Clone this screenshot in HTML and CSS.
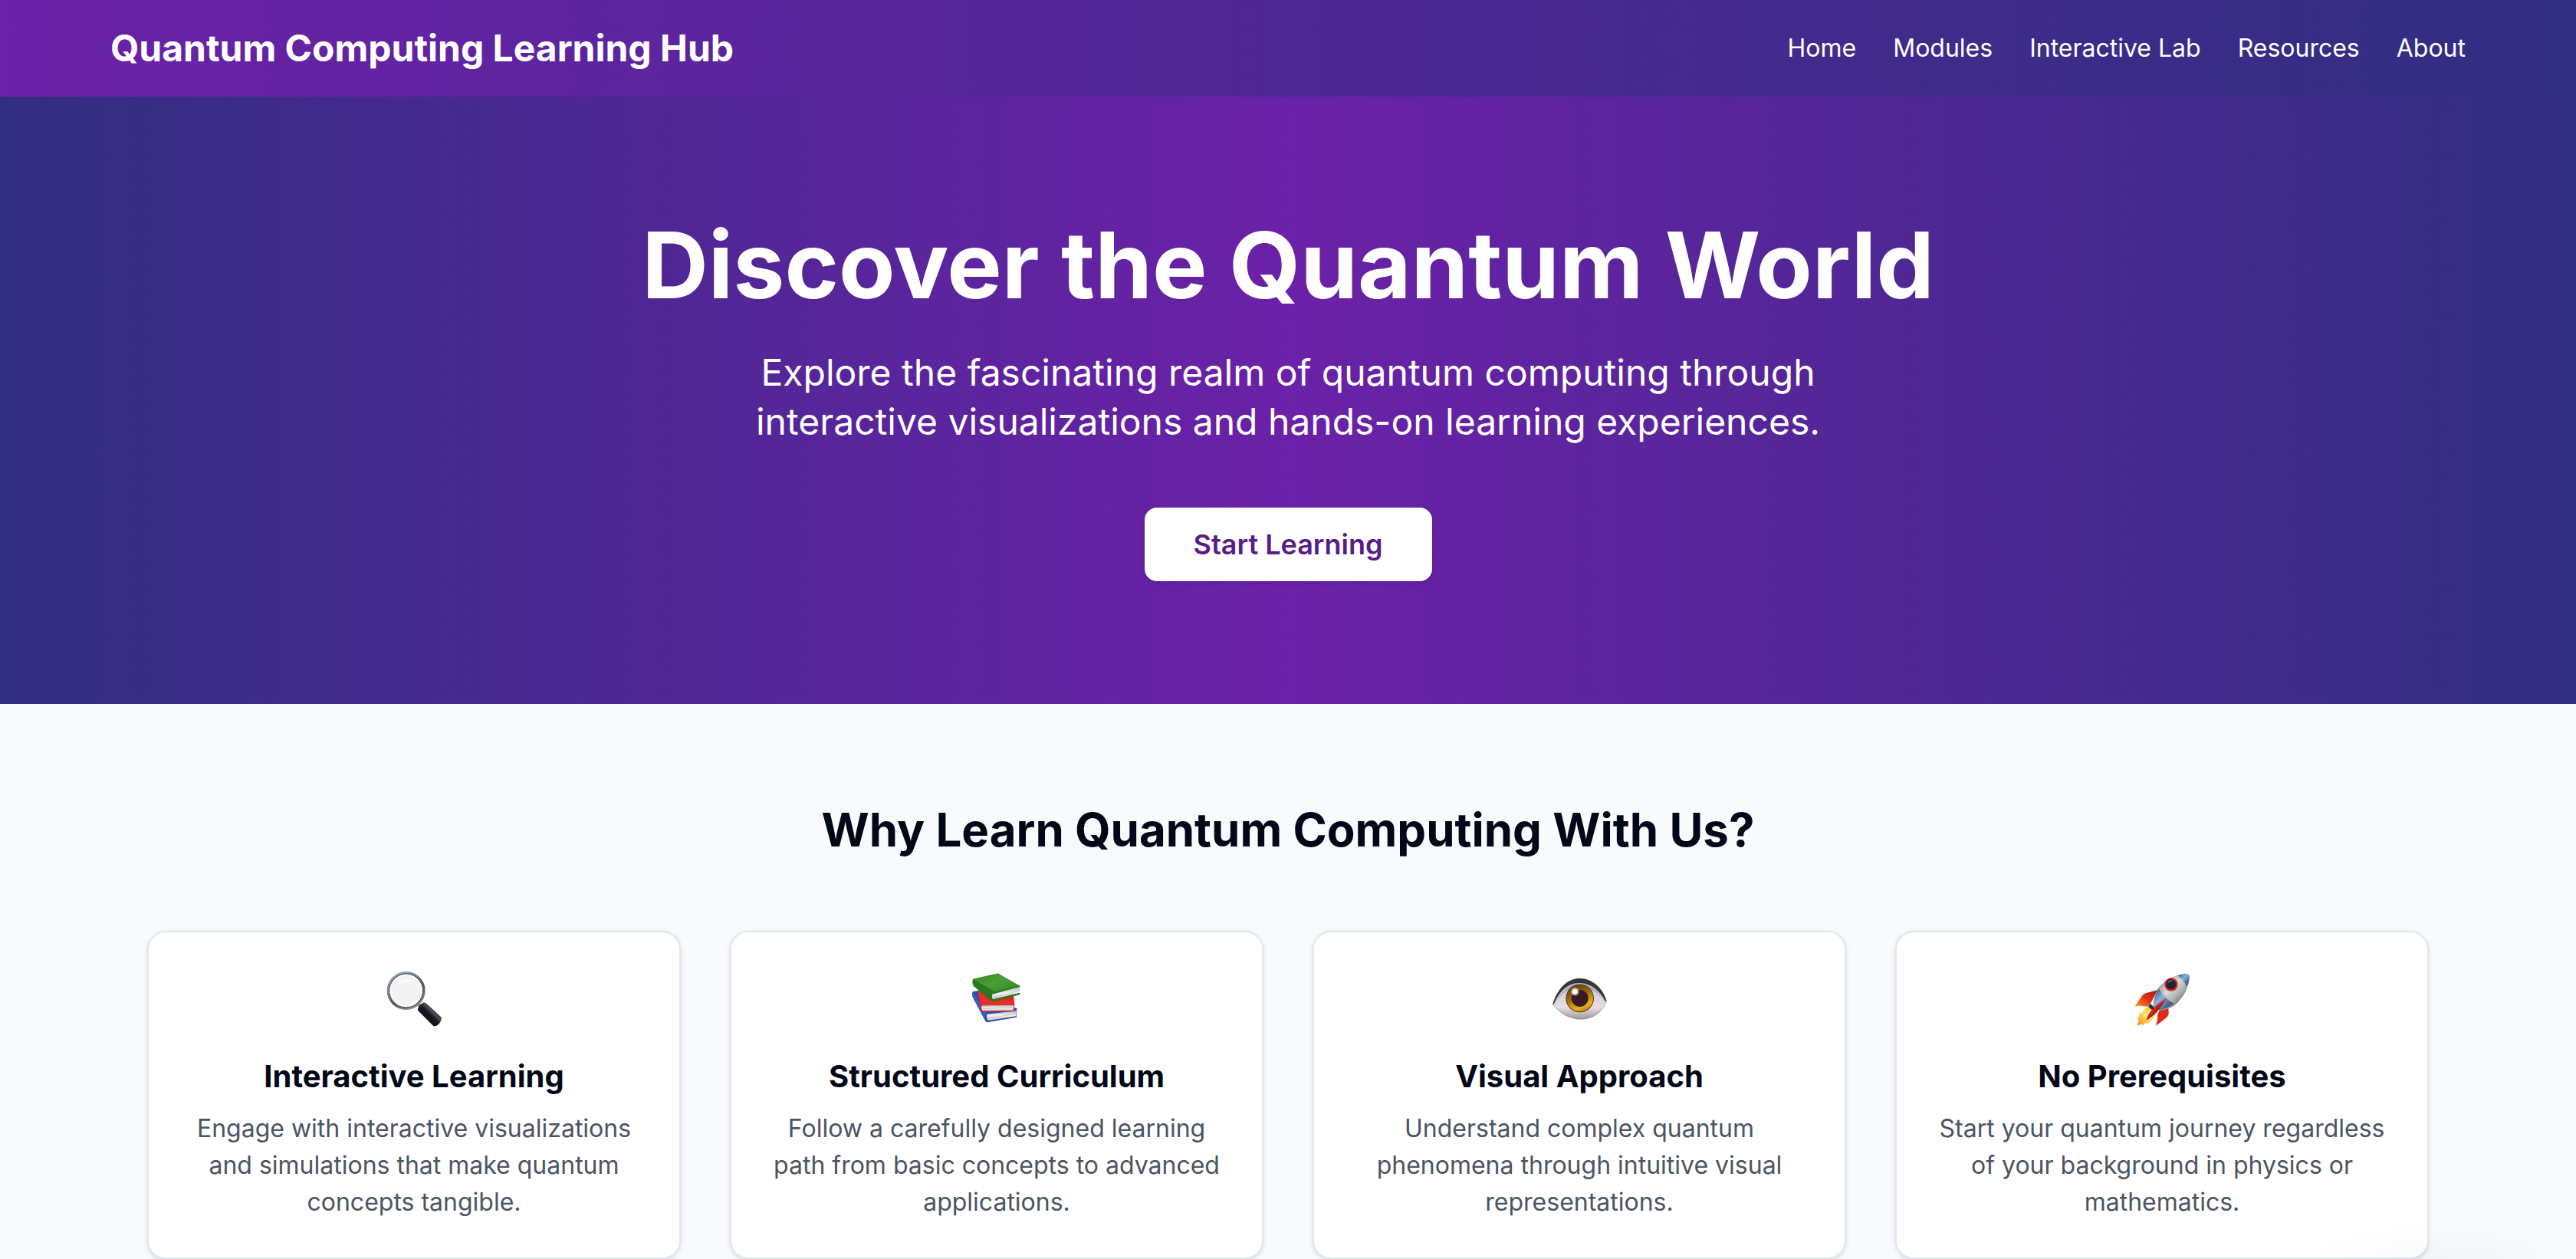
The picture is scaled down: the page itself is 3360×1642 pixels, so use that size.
FILE: index.html
```html
<!DOCTYPE html>
<html lang="en">
<head>
<meta charset="utf-8">
<meta name="viewport" content="width=device-width, initial-scale=1">
<title>Quantum Computing Learning Hub</title>
<link rel="stylesheet" href="styles.css">
</head>
<body>
<header class="site-header">
  <div class="container header-bar">
    <a class="brand" href="#">Quantum Computing Learning Hub</a>
    <nav class="nav" aria-label="Main">
      <a href="#home">Home</a>
      <a href="#modules">Modules</a>
      <a href="#lab">Interactive Lab</a>
      <a href="#resources">Resources</a>
      <a href="#about">About</a>
    </nav>
  </div>
</header>
<main>
  <section class="hero" id="home">
    <h1>Discover the Quantum World</h1>
    <p>Explore the fascinating realm of quantum computing through interactive visualizations and hands-on learning experiences.</p>
    <button class="cta" type="button">Start Learning</button>
  </section>
  <section class="features">
    <div class="container features-inner">
      <h2>Why Learn Quantum Computing With Us?</h2>
      <div class="cards">
        <article class="card">
          <svg class="icon" viewBox="30 42 240 240" aria-hidden="true">
            <defs>
              <linearGradient id="rim" x1="0" y1="0" x2="0.6" y2="1"><stop offset="0" stop-color="#8fc0f5"/><stop offset="0.35" stop-color="#8b9097"/><stop offset="0.7" stop-color="#55595c"/><stop offset="1" stop-color="#8c8a86"/></linearGradient>
              <linearGradient id="grip" x1="0" y1="1" x2="1" y2="0"><stop offset="0" stop-color="#08090b"/><stop offset="0.5" stop-color="#16181c"/><stop offset="0.62" stop-color="#474c54"/><stop offset="0.8" stop-color="#1b1d22"/><stop offset="1" stop-color="#050506"/></linearGradient>
            </defs>
            <path d="M159 181l9-7 10 10-8 9z" fill="#8d8f92"/>
            <circle cx="119" cy="126" r="71" fill="none" stroke="url(#rim)" stroke-width="8"/>
            <circle cx="119" cy="126" r="66" fill="#f3f3f4" stroke="#4c5055" stroke-width="4"/>
            <circle cx="119" cy="126" r="61" fill="#f3f3f4" stroke="#fcfcfd" stroke-width="5"/>
            <path d="M84 99c14-17 44-22 64-5-20-7-43-8-64 5z" fill="#fff"/>
            <path d="M165 199c2-11 10-22 21-26 5-1 9 1 13 4l55 50c5 5 4 11 0 20-5 10-14 17-22 18-5 1-8-2-12-6l-49-50c-4-4-7-6-6-10z" fill="url(#grip)"/>
            <path d="M183 186q4-6 8-4l47 45" fill="none" stroke="#555a63" stroke-width="3" stroke-linecap="round" opacity="0.7"/>
          </svg>
          <h3>Interactive Learning</h3>
          <p>Engage with interactive visualizations and simulations that make quantum concepts tangible.</p>
        </article>
        <article class="card">
          <svg class="icon" viewBox="30 42 240 240" aria-hidden="true">
            <defs>
              <linearGradient id="green" x1="0" y1="0" x2="1" y2="1"><stop offset="0" stop-color="#2f8a1c"/><stop offset="0.45" stop-color="#4b9e37"/><stop offset="1" stop-color="#2f8522"/></linearGradient>
              <linearGradient id="pages" x1="0" y1="0" x2="0" y2="1"><stop offset="0" stop-color="#b7b7b9"/><stop offset="0.5" stop-color="#f3f3f3"/><stop offset="1" stop-color="#c9c9cc"/></linearGradient>
            </defs>
            <path d="M56 130l24-4 45 56 104 12-1 36-114 20c-4 0-7-3-9-6L58 155c-4-8-5-18-2-25z" fill="#2c4fae"/>
            <path d="M112 218l116-13-2 21-110 17c-5-8-6-16-4-25z" fill="url(#pages)"/>
            <path d="M56 132l52 80c-5 9-6 22 1 34L60 160c-5-9-7-20-4-28z" fill="#375fc9"/>
            <path d="M79 124l138 24 3 34-2 26-123 1c-4 0-6-3-7-5L81 160c-4-10-5-25-2-36z" fill="#d62720"/>
            <path d="M92 184l125-1-2 20-120 2c-4-6-5-14-3-21z" fill="url(#pages)"/>
            <path d="M80 125l49 44 88-7 2 19-127 3-9-30c-4-10-5-20-3-29z" fill="#e43028"/>
            <path d="M57 80l94-21c4-1 7 1 11 3l79 45c2 2 1 4-2 5l-104 26z" fill="url(#green)"/>
            <path d="M57 80c-3 12-2 23 3 29l68 56c3 2 6 3 10 2l104-26-1-7-104 20c-7-8-7-18-1-28z" fill="#27791b"/>
            <path d="M135 137l106-26-2 23-104 26c-5-8-4-16 0-23z" fill="url(#pages)"/>
            <path d="M134 140l107-30-2-5-107 27z" fill="#2a7d1d"/>
            <path d="M133 154l103-27M94 197l120-5M114 234l110-16" stroke="#aaaaae" stroke-width="1.5" fill="none"/>
          </svg>
          <h3>Structured Curriculum</h3>
          <p>Follow a carefully designed learning path from basic concepts to advanced applications.</p>
        </article>
        <article class="card">
          <svg class="icon" viewBox="30 42 240 240" aria-hidden="true">
            <defs>
              <linearGradient id="white" x1="0" y1="0" x2="0" y2="1"><stop offset="0" stop-color="#a9a3b8"/><stop offset="0.35" stop-color="#d6d1de"/><stop offset="0.7" stop-color="#e6dee2"/><stop offset="1" stop-color="#a0969c"/></linearGradient>
              <linearGradient id="iris" x1="0.25" y1="0" x2="0.7" y2="1"><stop offset="0" stop-color="#5e3a12"/><stop offset="0.45" stop-color="#a3700f"/><stop offset="0.8" stop-color="#e5b418"/><stop offset="1" stop-color="#b98310"/></linearGradient>
              <radialGradient id="glint"><stop offset="0.45" stop-color="#fff"/><stop offset="1" stop-color="#fff" stop-opacity="0"/></radialGradient>
            </defs>
            <path d="M45 181c18-58 58-101 105-101 48 0 88 37 107 88-17 44-53 71-101 71-44 0-80-22-111-58z" fill="url(#white)"/>
            <path d="M45 181c17-61 58-103 106-103 50 0 91 38 106 89l-5 2c-20-41-55-73-104-73-42 0-76 31-98 83z" fill="#343538"/>
            <path d="M53 179c24-48 54-77 96-79 44 0 77 29 101 68-28-35-57-54-96-56-43-1-75 24-101 67z" fill="#9993aa" opacity="0.65"/>
            <circle cx="152" cy="156" r="55" fill="#593714"/>
            <circle cx="152" cy="156" r="52" fill="url(#iris)"/>
            <circle cx="152" cy="156" r="33" fill="#371b20"/>
            <circle cx="133" cy="130" r="18" fill="url(#glint)"/>
            <path d="M47 182c31 34 67 54 109 54 46 0 80-23 100-66" fill="none" stroke="#9a9097" stroke-width="3" opacity="0.7"/>
          </svg>
          <h3>Visual Approach</h3>
          <p>Understand complex quantum phenomena through intuitive visual representations.</p>
        </article>
        <article class="card">
          <svg class="icon" viewBox="30 42 240 240" aria-hidden="true">
            <defs>
              <linearGradient id="hull" x1="0.2" y1="0.2" x2="0.8" y2="0.8"><stop offset="0" stop-color="#8c949a"/><stop offset="0.4" stop-color="#d9dcdd"/><stop offset="0.7" stop-color="#b0b4b4"/><stop offset="1" stop-color="#646b6e"/></linearGradient>
              <linearGradient id="blue" x1="0.1" y1="0.1" x2="0.9" y2="0.9"><stop offset="0" stop-color="#315f97"/><stop offset="0.4" stop-color="#8bb1dc"/><stop offset="1" stop-color="#24446c"/></linearGradient>
              <linearGradient id="fin" x1="1" y1="0" x2="0" y2="1"><stop offset="0" stop-color="#a11808"/><stop offset="0.5" stop-color="#e83115"/><stop offset="1" stop-color="#ff9b21"/></linearGradient>
              <linearGradient id="flame" x1="1" y1="0" x2="0" y2="1"><stop offset="0" stop-color="#f2b91d"/><stop offset="0.5" stop-color="#ffe45a"/><stop offset="1" stop-color="#f57d1d"/></linearGradient>
            </defs>
            <path d="M133 124l-44 11c-9 3-14 6-18 13l-28 41c14-5 29-4 48-1l11-6z" fill="url(#fin)"/>
            <path d="M175 180l1 38c-3 8-8 13-14 18l-36 27c5-14 7-27 7-41l5-16z" fill="#e02a14"/>
            <path d="M96 188c-13 7-22 17-27 27l-11-1 5 12-10 6 6 9-6 22 15-6 8 5 9-9 9 2c16-9 28-25 33-47z" fill="url(#flame)"/>
            <path d="M83 226l25-24-16 38 24-29" fill="none" stroke="#fff2a1" stroke-width="5"/>
            <path d="M96 188l9-10 20 17-7 12z" fill="#24333f"/>
            <path d="M136 115c29-34 68-52 105-55 9-1 15 4 16 12 0 40-22 80-58 112-22 15-48 21-73 17-8-6-11-13-10-20 1-23 8-46 20-66z" fill="url(#hull)"/>
            <path d="M138 115c10 24 28 44 58 61-22 18-45 27-69 25-9-6-12-12-11-20 2-23 9-46 22-66z" fill="url(#blue)"/>
            <path d="M211 67c15-5 27-7 34-7 9 1 13 7 12 14 0 11-4 24-10 36-8-17-18-31-36-43z" fill="url(#blue)"/>
            <path d="M207 68c18 11 31 26 38 44" fill="none" stroke="#bda668" stroke-width="2"/>
            <path d="M143 117c11 22 29 41 53 54" fill="none" stroke="#c7b36e" stroke-width="3"/>
            <circle cx="186" cy="102" r="26" fill="#d9212c"/>
            <circle cx="185" cy="101" r="20" fill="#20262d"/>
            <path d="M171 97c4-11 15-15 24-9-10-1-16 5-24 9z" fill="#7e8c99"/>
            <path d="M168 157c-26 13-52 34-68 58l-13 29c26-17 45-33 54-48 9-12 16-25 27-39z" fill="#bd1713"/>
            <path d="M166 160c-30 18-46 35-59 60" fill="none" stroke="#ef4b38" stroke-width="3"/>
          </svg>
          <h3>No Prerequisites</h3>
          <p>Start your quantum journey regardless of your background in physics or mathematics.</p>
        </article>
      </div>
    </div>
  </section>
</main>
</body>
</html>
```
FILE: styles.css
```css
:root {
  --purple: #6b21a8;
  --indigo: #312e81;
  --ink: #020817;
  --shadow: 0 2px 6px rgb(0 0 0 / 10%), 0 2px 4px -2px rgb(0 0 0 / 10%);
}

* {
  box-sizing: border-box;
  margin: 0;
}

body {
  font-family: Inter, "Liberation Sans", sans-serif;
  font-size: 32px;
  line-height: 48px;
  color: var(--ink);
  background: #f9fafc;
}

/* Faint shade in the lower right corner of the window */
body::after {
  content: "";
  position: fixed;
  right: 0;
  bottom: 0;
  width: 360px;
  height: 48px;
  background: radial-gradient(ellipse at bottom, rgb(0 0 0 / 2%), transparent 70%);
  pointer-events: none;
}

.container {
  max-width: 3072px;
  margin: 0 auto;
}

.site-header {
  padding: 31px 48px;
  color: #fff;
  background: linear-gradient(to right, var(--purple), var(--indigo));
}

.header-bar {
  display: flex;
  flex-wrap: wrap;
  align-items: center;
  justify-content: space-between;
  gap: 0 48px;
}

.site-header a {
  color: inherit;
  text-decoration: none;
}

.brand {
  font-size: 48px;
  line-height: 64px;
  font-weight: 700;
}

.nav {
  display: flex;
  flex-wrap: wrap;
  gap: 0 48px;
}

.hero {
  display: flex;
  flex-direction: column;
  align-items: center;
  padding: 160px 48px;
  text-align: center;
  color: #fff;
  background: linear-gradient(to right, var(--indigo), var(--purple), var(--indigo));
}

.hero h1 {
  margin-bottom: 48px;
  font-size: 120px;
  line-height: 120px;
  font-weight: 700;
}

.hero p {
  max-width: 1536px;
  margin-bottom: 80px;
  font-size: 48px;
  line-height: 64px;
}

.cta {
  padding: 20px 64px;
  border: 0;
  border-radius: 16px;
  font: 600 36px/56px Inter, "Liberation Sans", sans-serif;
  color: #581c87;
  background: #fff;
  box-shadow: var(--shadow);
  cursor: pointer;
}

.features-inner {
  padding: 128px 48px;
}

.features h2 {
  margin-bottom: 96px;
  font-size: 60px;
  line-height: 72px;
  font-weight: 700;
  text-align: center;
}

.cards {
  display: grid;
  grid-template-columns: repeat(auto-fit, minmax(560px, 1fr));
  gap: 64px;
}

.card {
  display: flex;
  flex-direction: column;
  align-items: center;
  padding: 48px;
  border: 2px solid #e2e8f0;
  border-radius: 24px;
  text-align: center;
  background: #fff;
  box-shadow: var(--shadow);
}

.icon {
  width: 80px;
  height: 80px;
  margin-bottom: 32px;
}

.card h3 {
  margin-bottom: 16px;
  font-size: 40px;
  line-height: 56px;
  font-weight: 700;
}

.card p {
  color: #4b5563;
}
```
